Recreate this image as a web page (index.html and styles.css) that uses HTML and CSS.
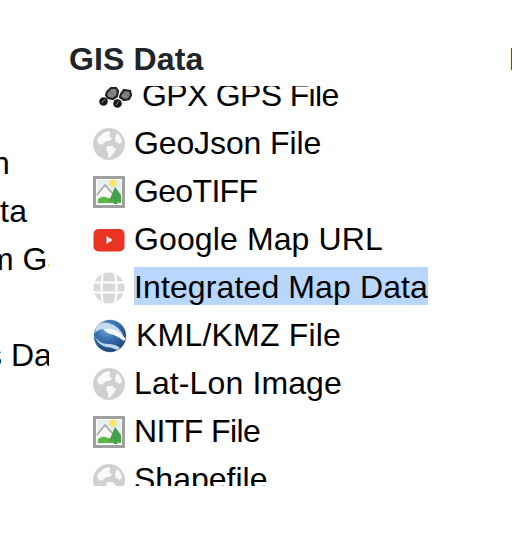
FILE: index.html
```html
<!DOCTYPE html>
<html lang="en">
<head>
<meta charset="utf-8">
<title>GIS Data</title>
<link rel="stylesheet" href="styles.css">
</head>
<body>
<svg class="defs" aria-hidden="true">
  <defs>
    <radialGradient id="ball" cx=".4" cy=".3" r=".75"><stop offset="0" stop-color="#6ba4d8"/><stop offset=".5" stop-color="#3469a8"/><stop offset="1" stop-color="#173c70"/></radialGradient>
    <clipPath id="disc"><circle cx="17" cy="17" r="16"/></clipPath>
    <symbol id="globe" viewBox="0 0 32 32">
      <circle cx="16" cy="16" r="16" fill="#d0d0d0"/>
      <path d="M10 5 15 3 18 5 16 8 19 10 17 13 13 13 10 16 8 17 5 15 4 11 7 8ZM14 18 19 18 23 21 21 25 18 28 17 30 15 29 15 24 13 21ZM24 5 27 8 29 13 27 16 23 14 22 10Z" fill="#fafafa"/>
    </symbol>
    <symbol id="picture" viewBox="0 0 32 32">
      <path d="M1.500 1.500h29v29h-29z" fill="#fff" stroke="#a0a0a0" stroke-width="3"/>
      <path d="M4 4h24v24H4z" fill="#e3eff3"/>
      <circle cx="20" cy="7" r="3.800" fill="#fbe36a"/>
      <path d="M4 19 12 9l9 10v6H4z" fill="#f7f8f5"/>
      <path d="m4 19 8-10 8 9" fill="none" stroke="#a3a8a3" stroke-width="1.500"/>
      <path d="M5 23q5-4 10-1l6 1 7-1v5H5z" fill="#5cb54b"/>
      <path d="m22 11 6 8v6h-4v3h-3v-3h-5l3-7z" fill="#459f48"/>
    </symbol>
  </defs>
</svg>
<main class="columns">
  <ul class="list side">
    <li class="row cut-n">n</li>
    <li class="row cut-ta">ta</li>
    <li class="row cut-ga">m Ga</li>
    <li class="row"></li>
    <li class="row cut-da">s Da</li>
  </ul>
  <section class="group">
    <h2 class="title">GIS Data</h2>
    <div class="viewport">
      <ul class="list">
        <li class="row gpx"><svg class="icon wide" viewBox="0 0 34 34"><g fill="#858585" stroke="#222" stroke-width="2.200"><path d="m8 13 4-4h5l2 3-1 5-4 3-5-1-2-3zM22 15l3-4 6 1 1 4-2 4-5 1-4-3z"/><path d="m10 12 5 4M25 14l4 3" stroke="#666" stroke-width="1"/></g><g fill="#191919"><circle cx="4.500" cy="22.500" r="4.300"/><circle cx="18.500" cy="24.500" r="4.300"/></g><path d="m3 24 3-4m11 6 3-4" stroke="#888"/></svg><span class="label tight">GPX GPS File</span></li>
        <li class="row"><svg class="icon"><use href="#globe"/></svg><span class="label geojson">GeoJson File</span></li>
        <li class="row"><svg class="icon"><use href="#picture"/></svg><span class="label tight">GeoTIFF</span></li>
        <li class="row"><svg class="icon" viewBox="0 0 32 32"><rect x=".5" y="5" width="31" height="22.500" rx="5" fill="#e93323"/><path d="m13.500 12 6 4-6 4z" fill="#fff"/></svg><span class="label">Google Map URL</span></li>
        <li class="row"><svg class="icon" viewBox="0 0 32 32"><circle cx="16" cy="16" r="15.500" fill="#d9d9d9"/><path d="M0 10.500h32M0 20.500h32M10 0q-3 16 0 32M22 0q3 16 0 32" fill="none" stroke="#fff" stroke-width="2"/></svg><span class="label selected">Integrated Map Data</span></li>
        <li class="row"><svg class="icon wide" viewBox="0 0 34 34"><circle cx="17" cy="17" r="16.500" fill="#d9d4b3"/><g clip-path="url(#disc)"><path d="M0 0h34v34H0z" fill="url(#ball)"/><path d="M3 8Q8 2 15 4q12 3 16 14-9-6-16-8Q7 9 2 14z" fill="#c5daed"/><path d="M10 10q13-1 18 5 3 4 5 4l-2 3q-8-6-14-7-4-1-7-5z" fill="#f5f8fa"/><path d="M1 16q5 9 14 9 8 0 12 4l-3 2q-6-3-11-3-7-2-10-8z" fill="#bdd4e9"/></g></svg><span class="label kml">KML/KMZ File</span></li>
        <li class="row"><svg class="icon"><use href="#globe"/></svg><span class="label">Lat-Lon Image</span></li>
        <li class="row"><svg class="icon"><use href="#picture"/></svg><span class="label nitf">NITF File</span></li>
        <li class="row"><svg class="icon"><use href="#globe"/></svg><span class="label shape">Shapefile</span></li>
      </ul>
    </div>
  </section>
  <h2 class="title next">I</h2>
</main>
</body>
</html>
```
FILE: styles.css
```css
* { box-sizing: border-box; }
body {
  margin: 0;
  overflow: hidden;
  background: #fff;
  color: #000;
  font: 32px/37px "Liberation Sans", Arial, sans-serif;
}
.defs { position: absolute; width: 0; height: 0; }
.columns { display: flex; height: 548px; }
.list { margin: 0; padding: 0; list-style: none; }
.side { flex: 0 0 49px; margin-right: 20px; padding-top: 139px; overflow: hidden; }
.group { flex: 0 0 440px; padding-top: 38px; }
.title { margin: 0; height: 48px; color: #212529; font-size: 32px; line-height: 43px; letter-spacing: 0.12px; font-weight: 700; white-space: nowrap; }
.viewport { height: 400px; overflow: hidden; padding-left: 24px; }
.viewport .list { margin-top: -15px; }
.row { display: flex; align-items: center; height: 48px; white-space: nowrap; }
.icon { flex: none; width: 32px; height: 32px; margin: 2px 9px 0 0; }
.wide { width: 34px; height: 34px; }
.gpx { padding-left: 6px; }
.label { height: 38px; margin-top: -2px; line-height: 41px; letter-spacing: 0.12px; }
.tight { letter-spacing: -0.66px; }
.geojson { letter-spacing: -0.12px; }
.nitf { letter-spacing: -0.6px; }
.kml { letter-spacing: 0.2px; }
.shape { letter-spacing: 0; }
.selected { background: #b9d6fd; }
.cut-n { margin-left: -8px; }
.cut-ta { margin-left: 0; letter-spacing: 0.4px; }
.cut-ga { margin-left: -13px; }
.cut-da { margin-left: -14px; }
.next { flex: none; margin: 38px 0 0; }
```
